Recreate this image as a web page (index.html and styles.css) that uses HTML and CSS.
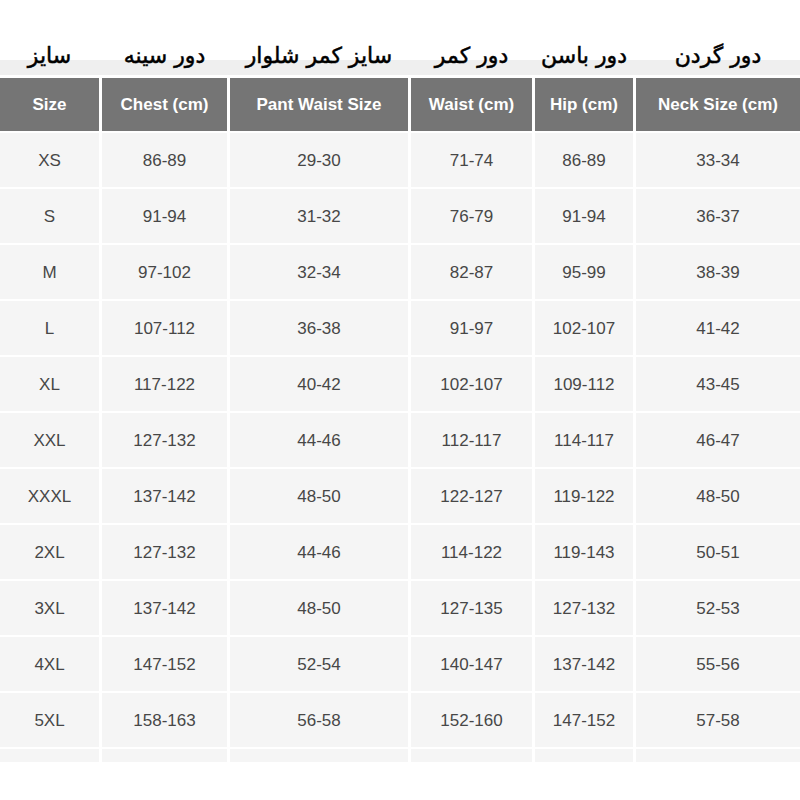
FILE: index.html
```html
<!DOCTYPE html>
<html lang="fa">
<head>
<meta charset="utf-8">
<title>Size Chart</title>
<link rel="stylesheet" href="styles.css">
</head>
<body>
<div class="page">
  <div class="labels">
    <div class="label" dir="rtl">سایز</div>
    <div class="label" dir="rtl">دور سینه</div>
    <div class="label" dir="rtl">سایز کمر شلوار</div>
    <div class="label" dir="rtl">دور کمر</div>
    <div class="label" dir="rtl">دور باسن</div>
    <div class="label" dir="rtl">دور گردن</div>
  </div>
  <div class="table">
    <div class="th">Size</div><div class="th">Chest (cm)</div><div class="th">Pant Waist Size</div><div class="th">Waist (cm)</div><div class="th">Hip (cm)</div><div class="th">Neck Size (cm)</div>

    <div class="td">XS</div><div class="td">86-89</div><div class="td">29-30</div><div class="td">71-74</div><div class="td">86-89</div><div class="td">33-34</div>
    <div class="td">S</div><div class="td">91-94</div><div class="td">31-32</div><div class="td">76-79</div><div class="td">91-94</div><div class="td">36-37</div>
    <div class="td">M</div><div class="td">97-102</div><div class="td">32-34</div><div class="td">82-87</div><div class="td">95-99</div><div class="td">38-39</div>
    <div class="td">L</div><div class="td">107-112</div><div class="td">36-38</div><div class="td">91-97</div><div class="td">102-107</div><div class="td">41-42</div>
    <div class="td">XL</div><div class="td">117-122</div><div class="td">40-42</div><div class="td">102-107</div><div class="td">109-112</div><div class="td">43-45</div>
    <div class="td">XXL</div><div class="td">127-132</div><div class="td">44-46</div><div class="td">112-117</div><div class="td">114-117</div><div class="td">46-47</div>
    <div class="td">XXXL</div><div class="td">137-142</div><div class="td">48-50</div><div class="td">122-127</div><div class="td">119-122</div><div class="td">48-50</div>
    <div class="td">2XL</div><div class="td">127-132</div><div class="td">44-46</div><div class="td">114-122</div><div class="td">119-143</div><div class="td">50-51</div>
    <div class="td">3XL</div><div class="td">137-142</div><div class="td">48-50</div><div class="td">127-135</div><div class="td">127-132</div><div class="td">52-53</div>
    <div class="td">4XL</div><div class="td">147-152</div><div class="td">52-54</div><div class="td">140-147</div><div class="td">137-142</div><div class="td">55-56</div>
    <div class="td">5XL</div><div class="td">158-163</div><div class="td">56-58</div><div class="td">152-160</div><div class="td">147-152</div><div class="td">57-58</div>
    <div class="td cut"></div><div class="td cut"></div><div class="td cut"></div><div class="td cut"></div><div class="td cut"></div><div class="td cut"></div>
  </div>
</div>
</body>
</html>
```

FILE: styles.css
```css
html, body {
  margin: 0;
  padding: 0;
  background: #ffffff;
}

.page {
  width: 800px;
  overflow: hidden;
  font-family: "Liberation Sans", Arial, sans-serif;
}

.labels {
  display: grid;
  grid-template-columns: 99px 125px 178px 121px 98px 164px;
  column-gap: 3px;
  height: 78px;
  background: linear-gradient(to bottom, #ffffff 0, #ffffff 60px, #efefef 60px, #efefef 75px, #ffffff 75px);
}

.label {
  font-family: "DejaVu Sans", sans-serif;
  font-size: 22px;
  color: #000000;
  -webkit-text-stroke: 0.5px #000000;
  text-align: center;
  line-height: 30px;
  padding-top: 41px;
  white-space: nowrap;
}

.table {
  display: grid;
  grid-template-columns: 99px 125px 178px 121px 98px 164px;
  grid-template-rows: 53px repeat(11, 54px) 13px;
  column-gap: 3px;
  row-gap: 2px;
}

.th {
  background: #757575;
  color: #ffffff;
  font-weight: bold;
  font-size: 17px;
  display: flex;
  align-items: center;
  justify-content: center;
  white-space: nowrap;
}

.td {
  background: #f5f5f5;
  color: #474747;
  font-size: 17px;
  display: flex;
  align-items: center;
  justify-content: center;
  padding-top: 1px;
}
```
